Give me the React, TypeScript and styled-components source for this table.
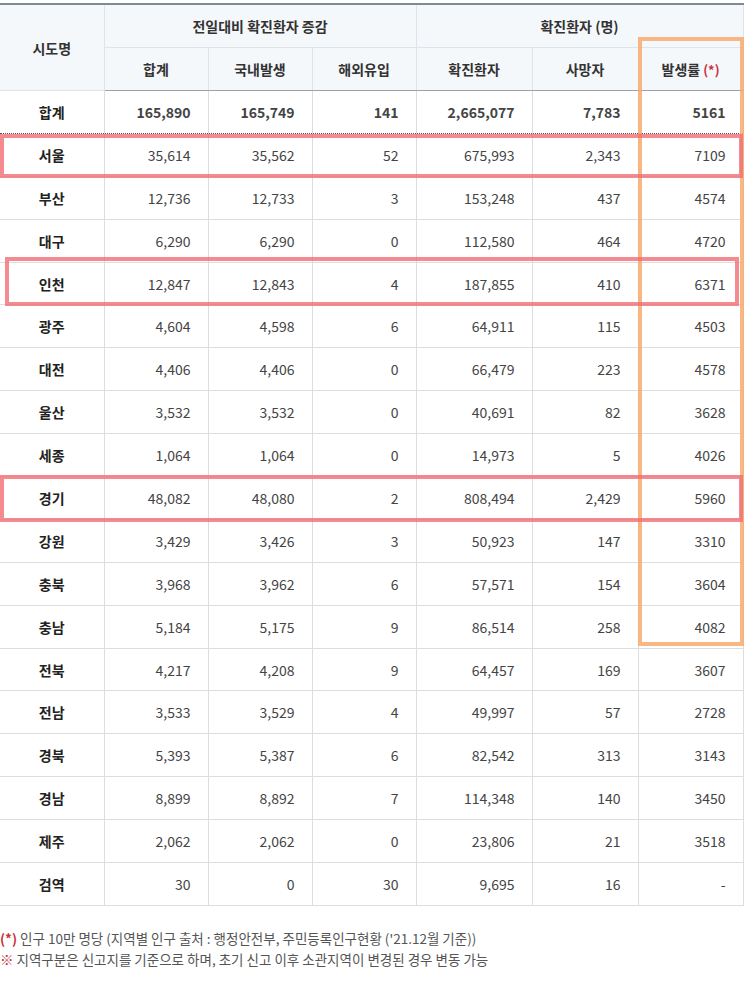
import React from 'react'
import styled, { createGlobalStyle } from 'styled-components'

const GlobalStyle = createGlobalStyle`
  body {
    margin: 0;
    background: #ffffff;
    font-family: "Noto Sans CJK KR", "Noto Sans", sans-serif;
    color: #333333;
  }
`

const Page = styled.div`
  width: 745px;
  padding-top: 3px;
`

const TableWrap = styled.div`
  position: relative;
  width: 743px;
`

const Table = styled.table`
  width: 743px;
  border-collapse: collapse;
  table-layout: fixed;
  border-top: 2px solid #7d8a9a;
  font-size: 14px;
`

const HeadCell = styled.th<{ $height: number }>`
  height: ${(p) => p.$height}px;
  padding: 0;
  background: #f5f8fb;
  color: #333333;
  font-weight: 600;
  text-align: center;
  border: 1px solid #dfe4ea;
  border-left: none;
  &:last-child {
    border-right: 1px solid #dfe4ea;
  }
`

const HeadRow = styled.tr`
  &:last-child th {
    border-bottom: 1px solid #9aa3ad;
  }
`

const Star = styled.span`
  color: #c8323a;
  font-size: 13px;
  margin-left: 3px;
`

const Row = styled.tr<{ $total?: boolean }>`
  height: 42.9px;
  td {
    border-bottom: ${(p) => (p.$total ? '1px dotted #555555' : '1px solid #dddddd')};
    font-weight: ${(p) => (p.$total ? 700 : 400)};
  }
`

const NameCell = styled.td`
  padding: 0;
  text-align: center;
  font-weight: 700 !important;
  color: #222222;
  border-right: 1px solid #dddddd;
`

const NumCell = styled.td`
  padding: 0 17px 0 0;
  text-align: right;
  color: #444444;
  border-right: 1px solid #dddddd;
`

const Highlight = styled.div<{ $top: number; $left: number; $width: number; $height: number; $color: string }>`
  position: absolute;
  top: ${(p) => p.$top}px;
  left: ${(p) => p.$left}px;
  width: ${(p) => p.$width}px;
  height: ${(p) => p.$height}px;
  border: 4px solid ${(p) => p.$color};
  box-sizing: border-box;
  pointer-events: none;
`

const Notes = styled.div`
  margin-top: 22px;
  font-size: 13.5px;
  line-height: 21px;
  color: #555555;
`

const Mark = styled.span<{ $bold?: boolean }>`
  color: #c8323a;
  font-weight: ${(p) => (p.$bold ? 700 : 400)};
`

const rows: string[][] = [
  ['서울', '35,614', '35,562', '52', '675,993', '2,343', '7109'],
  ['부산', '12,736', '12,733', '3', '153,248', '437', '4574'],
  ['대구', '6,290', '6,290', '0', '112,580', '464', '4720'],
  ['인천', '12,847', '12,843', '4', '187,855', '410', '6371'],
  ['광주', '4,604', '4,598', '6', '64,911', '115', '4503'],
  ['대전', '4,406', '4,406', '0', '66,479', '223', '4578'],
  ['울산', '3,532', '3,532', '0', '40,691', '82', '3628'],
  ['세종', '1,064', '1,064', '0', '14,973', '5', '4026'],
  ['경기', '48,082', '48,080', '2', '808,494', '2,429', '5960'],
  ['강원', '3,429', '3,426', '3', '50,923', '147', '3310'],
  ['충북', '3,968', '3,962', '6', '57,571', '154', '3604'],
  ['충남', '5,184', '5,175', '9', '86,514', '258', '4082'],
  ['전북', '4,217', '4,208', '9', '64,457', '169', '3607'],
  ['전남', '3,533', '3,529', '4', '49,997', '57', '2728'],
  ['경북', '5,393', '5,387', '6', '82,542', '313', '3143'],
  ['경남', '8,899', '8,892', '7', '114,348', '140', '3450'],
  ['제주', '2,062', '2,062', '0', '23,806', '21', '3518'],
  ['검역', '30', '0', '30', '9,695', '16', '-'],
]

const total = ['합계', '165,890', '165,749', '141', '2,665,077', '7,783', '5161']

const colWidths = [104, 104, 104, 104, 116, 106, 105]

const DataRow = ({ cells, isTotal }: { cells: string[]; isTotal?: boolean }) => (
  <Row $total={isTotal}>
    <NameCell>{cells[0]}</NameCell>
    {cells.slice(1).map((c, i) => (
      <NumCell key={i}>{c}</NumCell>
    ))}
  </Row>
)

const App = () => {
  return (
    <Page>
      <GlobalStyle />
      <TableWrap>
        <Table>
          <colgroup>
            {colWidths.map((w, i) => (
              <col key={i} style={{ width: w }} />
            ))}
          </colgroup>
          <thead>
            <HeadRow>
              <HeadCell $height={42} rowSpan={2}>시도명</HeadCell>
              <HeadCell $height={42} colSpan={3}>전일대비 확진환자 증감</HeadCell>
              <HeadCell $height={42} colSpan={3}>확진환자 (명)</HeadCell>
            </HeadRow>
            <HeadRow>
              <HeadCell $height={42}>합계</HeadCell>
              <HeadCell $height={42}>국내발생</HeadCell>
              <HeadCell $height={42}>해외유입</HeadCell>
              <HeadCell $height={42}>확진환자</HeadCell>
              <HeadCell $height={42}>사망자</HeadCell>
              <HeadCell $height={42}>
                발생률<Star>(*)</Star>
              </HeadCell>
            </HeadRow>
          </thead>
          <tbody>
            <DataRow cells={total} isTotal />
            {rows.map((r) => (
              <DataRow key={r[0]} cells={r} />
            ))}
          </tbody>
        </Table>
        <Highlight $top={34} $left={638} $width={106} $height={609} $color="rgba(248, 170, 110, 0.85)" />
        <Highlight $top={131} $left={0} $width={743} $height={44} $color="rgba(240, 110, 118, 0.8)" />
        <Highlight $top={254} $left={5} $width={734} $height={49} $color="rgba(240, 110, 118, 0.8)" />
        <Highlight $top={472} $left={0} $width={743} $height={47} $color="rgba(240, 110, 118, 0.8)" />
      </TableWrap>
      <Notes>
        <div>
          <Mark $bold>(*)</Mark> 인구 10만 명당 (지역별 인구 출처 : 행정안전부, 주민등록인구현황 ('21.12월 기준))
        </div>
        <div>
          <Mark>※</Mark> 지역구분은 신고지를 기준으로 하며, 초기 신고 이후 소관지역이 변경된 경우 변동 가능
        </div>
      </Notes>
    </Page>
  )
}

export default App
